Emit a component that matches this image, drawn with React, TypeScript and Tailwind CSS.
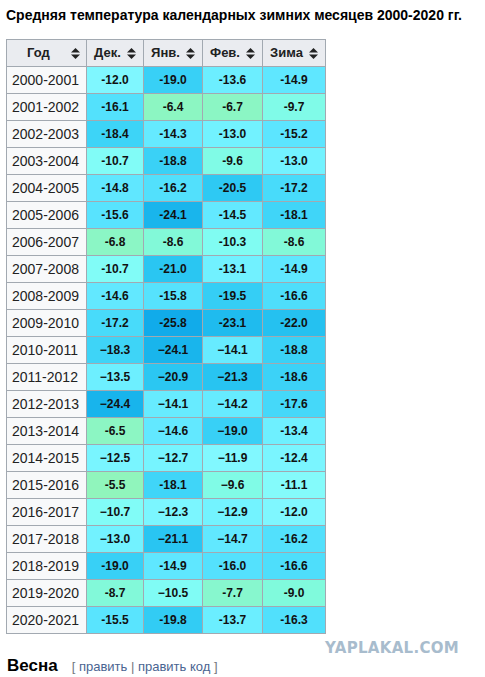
import React from 'react';

const M = '\u2212';

// [year, dec, jan, feb, winter]; strings keep the original minus signs
const rows: string[][] = [
  ['2000-2001', '-12.0', '-19.0', '-13.6', '-14.9'],
  ['2001-2002', '-16.1', '-6.4', '-6.7', '-9.7'],
  ['2002-2003', '-18.4', '-14.3', '-13.0', '-15.2'],
  ['2003-2004', '-10.7', '-18.8', '-9.6', '-13.0'],
  ['2004-2005', '-14.8', '-16.2', '-20.5', '-17.2'],
  ['2005-2006', '-15.6', '-24.1', '-14.5', '-18.1'],
  ['2006-2007', '-6.8', '-8.6', '-10.3', '-8.6'],
  ['2007-2008', '-10.7', '-21.0', '-13.1', '-14.9'],
  ['2008-2009', '-14.6', '-15.8', '-19.5', '-16.6'],
  ['2009-2010', '-17.2', '-25.8', '-23.1', '-22.0'],
  ['2010-2011', M + '18.3', M + '24.1', M + '14.1', '-18.8'],
  ['2011-2012', M + '13.5', M + '20.9', M + '21.3', '-18.6'],
  ['2012-2013', M + '24.4', M + '14.1', M + '14.2', '-17.6'],
  ['2013-2014', '-6.5', M + '14.6', M + '19.0', '-13.4'],
  ['2014-2015', M + '12.5', M + '12.7', M + '11.9', '-12.4'],
  ['2015-2016', '-5.5', '-18.1', M + '9.6', '-11.1'],
  ['2016-2017', M + '10.7', M + '12.3', M + '12.9', '-12.0'],
  ['2017-2018', M + '13.0', M + '21.1', M + '14.7', '-16.2'],
  ['2018-2019', '-19.0', '-14.9', '-16.0', '-16.6'],
  ['2019-2020', '-8.7', M + '10.5', '-7.7', '-9.0'],
  ['2020-2021', '-15.5', '-19.8', '-13.7', '-16.3'],
];

// colour stops: temperature -> rgb
const stops: [number, number[]][] = [
  [-5, [146, 245, 184]],
  [-7, [138, 246, 198]],
  [-9, [128, 250, 220]],
  [-10.5, [128, 252, 245]],
  [-11.5, [134, 250, 255]],
  [-13, [114, 242, 255]],
  [-15, [94, 230, 255]],
  [-17, [74, 220, 250]],
  [-19, [56, 208, 246]],
  [-21, [42, 198, 242]],
  [-24, [26, 182, 236]],
  [-26, [16, 170, 234]],
];

function cellColor(s: string) {
  const v = parseFloat(s.replace(M, '-'));
  if (v >= stops[0][0]) return `rgb(${stops[0][1].join(',')})`;
  for (let i = 0; i < stops.length - 1; i++) {
    const [a, ca] = stops[i];
    const [b, cb] = stops[i + 1];
    if (v <= a && v >= b) {
      const t = (a - v) / (a - b);
      const c = ca.map((x, k) => Math.round(x + (cb[k] - x) * t));
      return `rgb(${c.join(',')})`;
    }
  }
  return `rgb(${stops[stops.length - 1][1].join(',')})`;
}

const SortIcon = () => (
  <svg width="9" height="11" viewBox="0 0 9 11" className="shrink-0">
    <path d="M4.5 0 L9 4.5 L0 4.5 Z" fill="#222" />
    <path d="M0 6.5 L9 6.5 L4.5 11 Z" fill="#222" />
  </svg>
);

const heads = [
  { label: 'Год', w: 'w-[80px]' },
  { label: 'Дек.', w: 'w-[57px]' },
  { label: 'Янв.', w: 'w-[59px]' },
  { label: 'Фев.', w: 'w-[60px]' },
  { label: 'Зима', w: 'w-[63px]' },
];

export default function App() {
  return (
    <div className="w-[485px] h-[677px] bg-white overflow-hidden text-[#202122]" style={{ fontFamily: '"Liberation Sans", Arial, sans-serif' }}>
      <div className="pl-[6px] pt-[7px] text-[14px] font-bold leading-[16px] text-black">
        Средняя температура календарных зимних месяцев 2000-2020 гг.
      </div>

      <table className="ml-[6px] mt-[16px] border-collapse table-fixed w-[319px]">
        <thead>
          <tr className="h-[27px]">
            {heads.map((h, i) => (
              <th key={h.label} className={`${h.w} border border-[#a2a9b1] bg-[#eaecf0] p-0 text-[13px] font-bold`}>
                <div className={`flex items-center ${i === 0 ? 'pl-[20px] pr-[6px] justify-between' : 'pl-[6px] pr-[6px] justify-center gap-[6px]'}`}>
                  <span>{h.label}</span>
                  <SortIcon />
                </div>
              </th>
            ))}
          </tr>
        </thead>
        <tbody>
          {rows.map((r) => (
            <tr key={r[0]} className="h-[27px]">
              <td className="border border-[#a2a9b1] bg-[#f8f9fa] pl-[5px] p-0 text-[14px] text-[#222]">{r[0]}</td>
              {r.slice(1).map((v, j) => (
                <td
                  key={j}
                  className="border border-[#a2a9b1] p-0 text-center text-[12px] font-bold text-[#111]"
                  style={{ backgroundColor: cellColor(v) }}
                >
                  {v}
                </td>
              ))}
            </tr>
          ))}
        </tbody>
      </table>

      <div className="flex justify-end pr-[26px] mt-[6px] h-[16px]">
        <span className="text-[15px] font-black leading-[16px] text-[#a8bccd] tracking-[0.3px]" style={{ fontFamily: '"DejaVu Sans", sans-serif' }}>
          YAPLAKAL.COM
        </span>
      </div>

      <div className="flex items-baseline pl-[7px] leading-[20px]">
        <span className="text-[17px] font-bold text-black">Весна</span>
        <span className="ml-[14px] text-[13px] text-[#72777d]">
          [ <span className="text-[#4a6491]">править</span> | <span className="text-[#4a6491]">править код</span> ]
        </span>
      </div>
    </div>
  );
}
